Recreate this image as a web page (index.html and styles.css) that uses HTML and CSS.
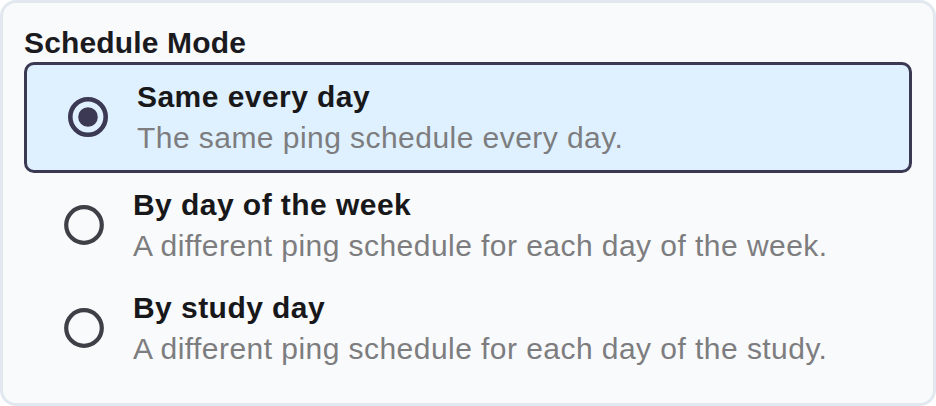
FILE: index.html
```html
<!DOCTYPE html>
<html>
<head>
<meta charset="utf-8">
<link rel="stylesheet" href="styles.css">
</head>
<body>
<div class="card">
  <div class="label">Schedule Mode</div>
  <div class="options">
    <div class="option selected">
      <svg class="radio" viewBox="0 0 40 40" width="40" height="40">
        <circle cx="20" cy="20" r="17.7" fill="none" stroke="#3c3955" stroke-width="4.6"/>
        <circle cx="20" cy="20" r="9.8" fill="#3c3955"/>
      </svg>
      <div class="text">
        <div class="title">Same every day</div>
        <div class="desc">The same ping schedule every day.</div>
      </div>
    </div>
    <div class="option">
      <svg class="radio" viewBox="0 0 40 40" width="40" height="40">
        <circle cx="20" cy="20" r="17.8" fill="none" stroke="#3f4047" stroke-width="4.2"/>
      </svg>
      <div class="text">
        <div class="title">By day of the week</div>
        <div class="desc">A different ping schedule for each day of the week.</div>
      </div>
    </div>
    <div class="option">
      <svg class="radio" viewBox="0 0 40 40" width="40" height="40">
        <circle cx="20" cy="20" r="17.8" fill="none" stroke="#3f4047" stroke-width="4.2"/>
      </svg>
      <div class="text">
        <div class="title">By study day</div>
        <div class="desc">A different ping schedule for each day of the study.</div>
      </div>
    </div>
  </div>
</div>
</body>
</html>
```

FILE: styles.css
```css
html, body {
  margin: 0;
  padding: 0;
  background: #ffffff;
}
body {
  font-family: "Liberation Sans", Arial, Helvetica, sans-serif;
}
.card {
  box-sizing: border-box;
  width: 936px;
  height: 406px;
  background: #f8fafc;
  border: 3px solid #e2e8f0;
  border-radius: 16px;
  padding: 21px 21px 0 21px;
}
.label {
  font-size: 30px;
  font-weight: bold;
  line-height: 38px;
  color: #1b1b1f;
  letter-spacing: 0.15px;
}
.options {
  display: flex;
  flex-direction: column;
}
.option {
  display: flex;
  align-items: center;
  gap: 29px;
  padding: 10.5px 20px 10.5px 40px;
}
.option.selected {
  background: #dff1fe;
  border: 3px solid #3b3853;
  border-radius: 10px;
  padding: 11px 20px 12px 41px;
}
.radio {
  flex: none;
  display: block;
}
.text {
  display: flex;
  flex-direction: column;
}
.title {
  font-size: 30px;
  font-weight: bold;
  line-height: 41px;
  color: #18181b;
  letter-spacing: 0.45px;
}
.desc {
  font-size: 30px;
  line-height: 41px;
  color: #7d7d7f;
  letter-spacing: 0.45px;
}
```
